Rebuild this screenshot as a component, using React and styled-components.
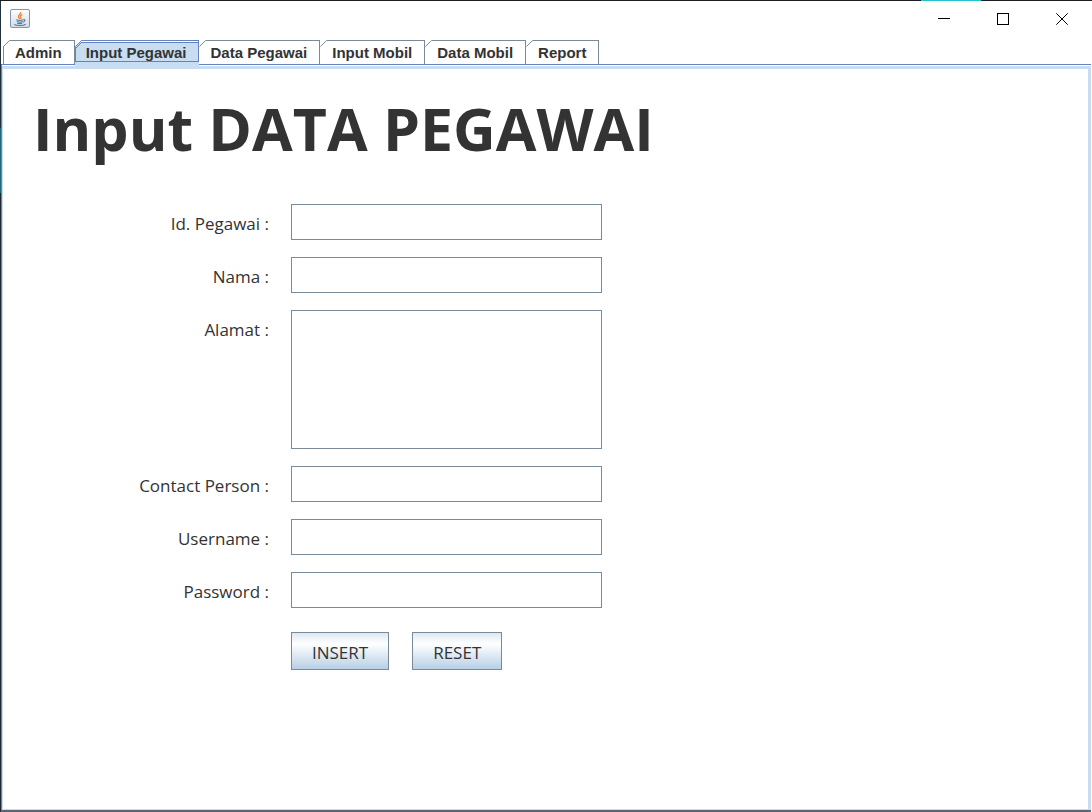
import React from "react";
import styled, { createGlobalStyle, css } from "styled-components";

const ink = "#333333";
const steel = "#7a8a99";
const blue = "#6382bf";
const pale = "#c8ddf2";

const Global = createGlobalStyle`
  *, *::before, *::after { box-sizing: border-box; }
  body { margin: 0; background: #fff; color: ${ink}; }
`;

const Frame = styled.div`
  position: relative;
  display: flex;
  flex-direction: column;
  min-height: 100vh;
  padding: 1px 0 0 1px;
  background:
    linear-gradient(#26c4c9, #26c4c9) right 111px top / 60px 1px no-repeat,
    linear-gradient(#1c1c20, #1c1c20) left top / 100% 1px no-repeat,
    linear-gradient(#22303a 0 128px, #1f6a74 128px 193px, #22272f 193px) left top / 1px 100% no-repeat,
    #ffffff;
`;

const TitleBar = styled.header`
  display: flex;
  justify-content: space-between;
  height: 39px;
`;

const AppIcon = styled.svg`
  display: block;
  width: 20px;
  height: 20px;
  margin: 8px 9px;
`;

const WindowControls = styled.div`
  display: flex;
`;

const ControlButton = styled.button`
  display: flex;
  align-items: center;
  width: 59px;
  height: 36px;
  padding: 0 0 0 23px;
  border: 0;
  background: transparent;

  svg {
    display: block;
    width: 12px;
    height: 12px;
  }
`;

const TabBar = styled.nav`
  display: flex;
  height: 24px;
  padding-left: 2px;
`;

const TabButton = styled.button`
  position: relative;
  height: 24px;
  padding: 2px 12px 0;
  border: 0;
  border-right: 1px solid ${steel};
  background:
    linear-gradient(${steel}, ${steel}) 7px 0 / 100% 1px no-repeat,
    linear-gradient(${steel}, ${steel}) 0 6px / 1px 100% no-repeat,
    #fff;
  color: ${ink};
  font: bold 15px/20px "Liberation Sans", Arial, sans-serif;
  white-space: nowrap;

  & + & {
    background:
      linear-gradient(${steel}, ${steel}) 7px 0 / 100% 1px no-repeat,
      #fff;
  }

  ${(p) =>
    p.$selected &&
    css`
      &&& {
        z-index: 1;
        padding: 2px 11px 0;
        border-color: ${blue};
        background:
          linear-gradient(${blue}, ${blue}) 6px 0 / 100% 1px no-repeat,
          linear-gradient(${blue}, ${blue}) 6px 2px / 100% 1px no-repeat,
          linear-gradient(${blue}, ${blue}) 0 7px / 1px 14px no-repeat,
          linear-gradient(${blue}, ${blue}) 0 21px / 100% 1px no-repeat,
          linear-gradient(#fff, #fff) 0 0 / 100% 2px no-repeat,
          ${pale};
      }

      &::after {
        content: "";
        position: absolute;
        left: 0;
        right: -1px;
        top: 22px;
        height: 5px;
        background: ${pale};
      }
    `}
`;

const Corner = styled.svg`
  position: absolute;
  left: 0;
  top: 0;
  width: 8px;
  height: 8px;
`;

const Panel = styled.main`
  flex: 1;
  display: flex;
  flex-direction: column;
  margin-right: 1px;
  border-top: 1px solid ${blue};
  border-left: 1px solid ${blue};
  border-bottom: 2px solid #5a6673;
`;

const PanelBody = styled.div`
  flex: 1;
  margin-top: 1px;
  padding: 20px 30px;
  border: solid ${pale};
  border-width: 3px 3px 1px 1px;
`;

const Title = styled.h1`
  margin: 0 0 37px;
  font: bold 59px/78px "Open Sans", "Noto Sans", sans-serif;
`;

const Form = styled.form`
  display: grid;
  grid-template-columns: 236px 311px;
  column-gap: 22px;
  row-gap: 17px;
  align-items: start;
`;

const Label = styled.label`
  padding-top: 8px;
  font: 17px/24px "Open Sans", "Noto Sans", sans-serif;
  text-align: right;
`;

const field = css`
  display: block;
  width: 100%;
  margin: 0;
  padding: 4px 6px;
  border: 1px solid ${steel};
  border-radius: 0;
  outline: 0;
  background: #fff;
  color: ${ink};
  font: 17px/24px "Open Sans", "Noto Sans", sans-serif;
`;

const TextField = styled.input`
  ${field}
  height: 36px;
`;

const TextArea = styled.textarea`
  ${field}
  height: 139px;
  resize: none;
`;

const Actions = styled.div`
  grid-column: 2;
  display: flex;
  gap: 23px;
  padding-top: 7px;
`;

const ActionButton = styled.button`
  height: 38px;
  padding: 4px 20px 0;
  border: 1px solid ${steel};
  background: linear-gradient(#dde8f3 0%, #ffffff 30%, #b8cfe5 100%);
  color: ${ink};
  font: 17px/24px "Open Sans", "Noto Sans", sans-serif;
`;

const tabs = ["Admin", "Input Pegawai", "Data Pegawai", "Input Mobil", "Data Mobil", "Report"];

const fields = [
  { id: "id-pegawai", label: "Id. Pegawai :" },
  { id: "nama", label: "Nama :" },
  { id: "alamat", label: "Alamat :", multiline: true },
  { id: "contact", label: "Contact Person :" },
  { id: "username", label: "Username :" },
  { id: "password", label: "Password :", type: "password" },
];

function JavaIcon() {
  return (
    <AppIcon viewBox="0 0 20 20" aria-hidden="true">
      <defs>
        <linearGradient id="tile" x1="0" y1="0" x2="0" y2="1">
          <stop offset="0" stopColor="#ffffff" />
          <stop offset="1" stopColor="#cfdbe5" />
        </linearGradient>
      </defs>
      <rect x="0.5" y="0.5" width="19" height="18" rx="1.5" fill="url(#tile)" stroke="#8496a8" />
      <path d="M10.8 3c.8 2.200-3.300 3-2.300 5.200.3.700 1 1.100 1.200 1.900M12.400 5.600c-2.200 1-2.500 1.800-1.600 2.800.5.600.2 1.200-.4 1.700" fill="none" stroke="#e8833a" strokeWidth="1.300" />
      <path d="M6.200 10.800c2 .7 5.400.6 7 0M6.800 12.600c1.800.7 4.400.6 5.800 0M7.200 14.200c1.600.6 3.600.5 5 0M13.400 10.600c2.200-.4 2 2-.6 2.600M4.400 15.600c2.600 1.400 9 1.300 11.200-.4" fill="none" stroke="#55789c" strokeWidth="1.100" />
    </AppIcon>
  );
}

export default function App() {
  return (
    <Frame>
      <Global />
      <TitleBar>
        <JavaIcon />
        <WindowControls>
          <ControlButton type="button" aria-label="Minimize">
            <svg viewBox="0 0 12 12"><path d="M0 5.500h12" stroke="#000" /></svg>
          </ControlButton>
          <ControlButton type="button" aria-label="Maximize">
            <svg viewBox="0 0 12 12"><rect x=".5" y=".5" width="11" height="11" fill="none" stroke="#000" /></svg>
          </ControlButton>
          <ControlButton type="button" aria-label="Close">
            <svg viewBox="0 0 12 12"><path d="M.3.3l11.400 11.400M11.700.3L.3 11.700" stroke="#000" /></svg>
          </ControlButton>
        </WindowControls>
      </TitleBar>
      <TabBar>
        {tabs.map((name) => {
          const selected = name === "Input Pegawai";
          return (
            <TabButton key={name} type="button" $selected={selected} aria-pressed={selected}>
              <Corner viewBox="0 0 8 8" aria-hidden="true">
                <path d="M0 0h7L0 6z" fill="#fff" />
                <path d="M.5 6.500l6-6H8" fill="none" stroke={selected ? blue : steel} />
                {selected && <path d="M.5 8.500l6-6H8" fill="none" stroke={blue} />}
              </Corner>
              {name}
            </TabButton>
          );
        })}
      </TabBar>
      <Panel>
        <PanelBody>
          <Title>Input DATA PEGAWAI</Title>
          <Form onSubmit={(e) => e.preventDefault()}>
            {fields.map((f) => (
              <React.Fragment key={f.id}>
                <Label htmlFor={f.id}>{f.label}</Label>
                {f.multiline ? <TextArea id={f.id} /> : <TextField id={f.id} type={f.type || "text"} />}
              </React.Fragment>
            ))}
            <Actions>
              <ActionButton type="submit">INSERT</ActionButton>
              <ActionButton type="reset">RESET</ActionButton>
            </Actions>
          </Form>
        </PanelBody>
      </Panel>
    </Frame>
  );
}
